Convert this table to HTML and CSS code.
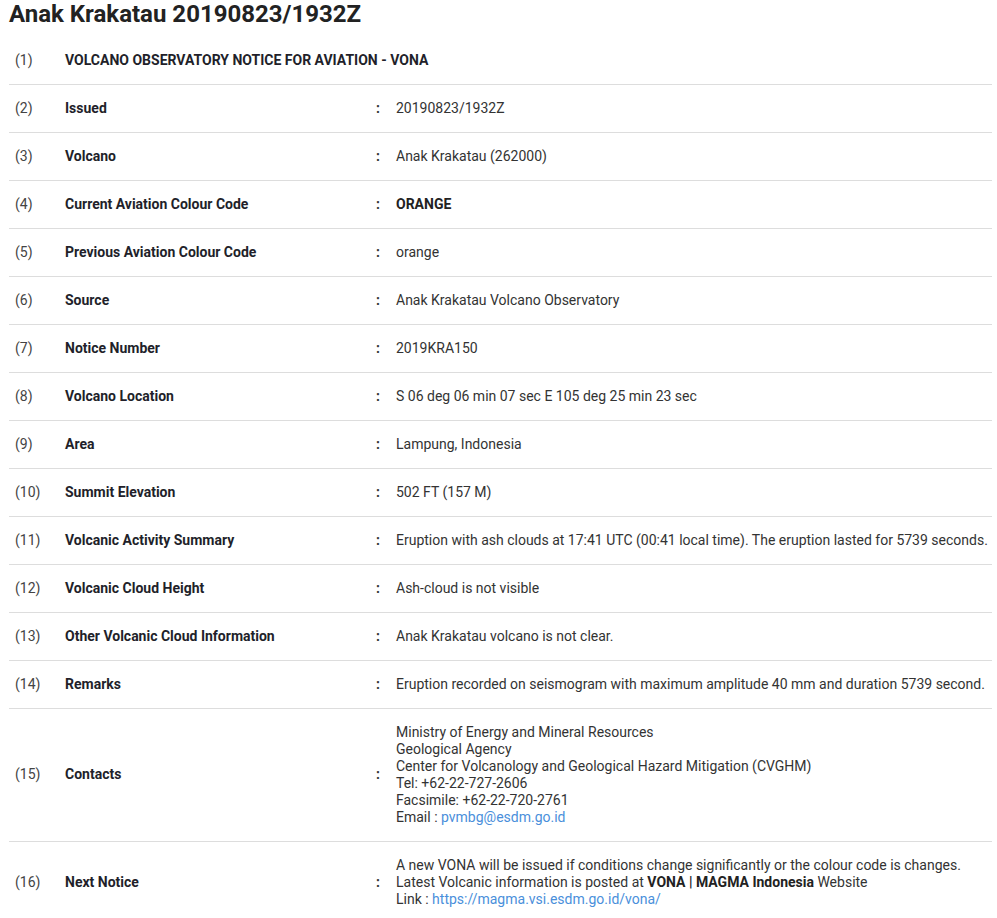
FILE: index.html
```html
<!DOCTYPE html>
<html>
<head>
<meta charset="utf-8">
<title>Anak Krakatau 20190823/1932Z</title>
<link rel="stylesheet" href="styles.css">
</head>
<body>
<div class="page">
  <h1 class="title">Anak Krakatau 20190823/1932Z</h1>
  <table class="vona">
    <colgroup>
      <col class="c-num"><col class="c-label"><col class="c-colon"><col class="c-value">
    </colgroup>
    <tbody>
      <tr><td class="num">(1)</td><td class="label" colspan="3">VOLCANO OBSERVATORY NOTICE FOR AVIATION - VONA</td></tr>
      <tr><td class="num">(2)</td><td class="label">Issued</td><td class="colon">:</td><td class="value">20190823/1932Z</td></tr>
      <tr><td class="num">(3)</td><td class="label">Volcano</td><td class="colon">:</td><td class="value">Anak Krakatau (262000)</td></tr>
      <tr><td class="num">(4)</td><td class="label">Current Aviation Colour Code</td><td class="colon">:</td><td class="value"><b>ORANGE</b></td></tr>
      <tr><td class="num">(5)</td><td class="label">Previous Aviation Colour Code</td><td class="colon">:</td><td class="value">orange</td></tr>
      <tr><td class="num">(6)</td><td class="label">Source</td><td class="colon">:</td><td class="value">Anak Krakatau Volcano Observatory</td></tr>
      <tr><td class="num">(7)</td><td class="label">Notice Number</td><td class="colon">:</td><td class="value">2019KRA150</td></tr>
      <tr><td class="num">(8)</td><td class="label">Volcano Location</td><td class="colon">:</td><td class="value">S 06 deg 06 min 07 sec E 105 deg 25 min 23 sec</td></tr>
      <tr><td class="num">(9)</td><td class="label">Area</td><td class="colon">:</td><td class="value">Lampung, Indonesia</td></tr>
      <tr><td class="num">(10)</td><td class="label">Summit Elevation</td><td class="colon">:</td><td class="value">502 FT (157 M)</td></tr>
      <tr><td class="num">(11)</td><td class="label">Volcanic Activity Summary</td><td class="colon">:</td><td class="value">Eruption with ash clouds at 17:41 UTC (00:41 local time). The eruption lasted for 5739 seconds.</td></tr>
      <tr><td class="num">(12)</td><td class="label">Volcanic Cloud Height</td><td class="colon">:</td><td class="value">Ash-cloud is not visible</td></tr>
      <tr><td class="num">(13)</td><td class="label">Other Volcanic Cloud Information</td><td class="colon">:</td><td class="value">Anak Krakatau volcano is not clear.</td></tr>
      <tr><td class="num">(14)</td><td class="label">Remarks</td><td class="colon">:</td><td class="value">Eruption recorded on seismogram with maximum amplitude 40 mm and duration 5739 second.</td></tr>
      <tr><td class="num">(15)</td><td class="label">Contacts</td><td class="colon">:</td><td class="value">Ministry of Energy and Mineral Resources<br>Geological Agency<br>Center for Volcanology and Geological Hazard Mitigation (CVGHM)<br>Tel: +62-22-727-2606<br>Facsimile: +62-22-720-2761<br>Email : <a href="#">pvmbg@esdm.go.id</a></td></tr>
      <tr><td class="num">(16)</td><td class="label">Next Notice</td><td class="colon">:</td><td class="value">A new VONA will be issued if conditions change significantly or the colour code is changes.<br>Latest Volcanic information is posted at <b>VONA | MAGMA Indonesia</b> Website<br>Link : <a href="#">https://magma.vsi.esdm.go.id/vona/</a></td></tr>
    </tbody>
  </table>
</div>
</body>
</html>
```
FILE: styles.css
```css
html, body {
  margin: 0;
  padding: 0;
  background: #fff;
}
body {
  font-family: Roboto, "Liberation Sans", sans-serif;
  font-size: 14px;
  color: #333;
}
.page {
  padding: 0 5px 0 9px;
}
.title {
  margin: 0 0 8px 0;
  font-size: 24px;
  line-height: 1.2;
  font-weight: 700;
  color: #222;
}
.vona {
  width: 983px;
  border-collapse: collapse;
  table-layout: fixed;
}
.c-num { width: 50px; }
.c-label { width: 311px; }
.c-colon { width: 20px; }
.c-value { width: auto; }
.vona td {
  padding: 15px 6px;
  line-height: 17px;
  vertical-align: middle;
  border-bottom: 1px solid #ddd;
  white-space: nowrap;
}
.vona tr:last-child td {
  border-bottom: none;
}
.num {
  color: #444;
}
.label {
  font-weight: 700;
  color: #221f2a;
}
.colon {
  font-weight: 700;
  color: #333;
}
.value {
  color: #333;
}
.value b {
  color: #222;
}
.value a {
  color: #4a8fdb;
  text-decoration: none;
}
```
